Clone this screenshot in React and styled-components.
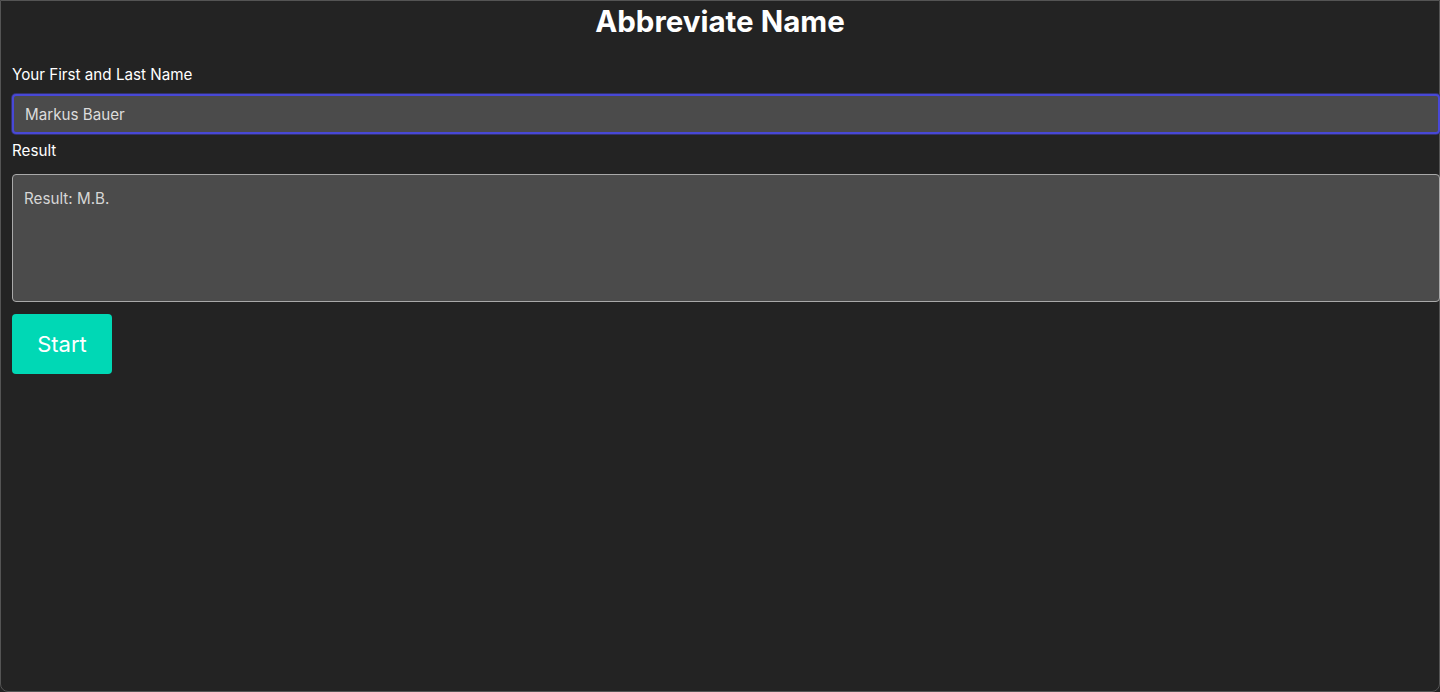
import React from "react";
import styled, { createGlobalStyle } from "styled-components";

const GlobalStyle = createGlobalStyle`
  html, body {
    margin: 0;
    padding: 0;
    background: #232323;
    overflow: hidden;
  }
  body {
    font-family: Inter, "Liberation Sans", sans-serif;
    color: #ffffff;
  }
`;

const Frame = styled.div`
  box-sizing: border-box;
  height: 692px;
  border: 1px solid #545454;
  border-radius: 0 0 8px 8px;
  background: #232323;
`;

const Title = styled.h1`
  margin: 2px 0 0;
  font-size: 29.5px;
  line-height: 36px;
  font-weight: 700;
  text-align: center;
  color: #ffffff;
`;

const Form = styled.div`
  display: flex;
  flex-direction: column;
  align-items: flex-start;
  padding: 26px 0 0 11px;
`;

const Label = styled.label`
  display: block;
  font-size: 15.2px;
  line-height: 20px;
  color: #ffffff;
  margin-bottom: ${(p) => p.$gap}px;
`;

const Field = styled.input`
  box-sizing: border-box;
  width: calc(100% + 1px);
  height: 40px;
  padding: 0 11px;
  margin: 0 0 7px;
  background: #4b4b4b;
  color: #dcdcdc;
  font-family: Inter, "Liberation Sans", sans-serif;
  font-size: 15.2px;
  border: 2px solid #4848d6;
  border-radius: 4px;
  box-shadow: 0 0 0 1px #33336e;
  outline: none;
  caret-color: #ffffff;
`;

const ResultBox = styled.textarea`
  box-sizing: border-box;
  width: calc(100% + 1px);
  height: 128px;
  padding: 14px 11px;
  margin: 0 0 12px;
  background: #4b4b4b;
  color: #d6d6d6;
  font-family: Inter, "Liberation Sans", sans-serif;
  font-size: 15.2px;
  line-height: 20px;
  border: 1px solid #a9a9a9;
  border-radius: 4px;
  resize: none;
  outline: none;
`;

const StartButton = styled.button`
  width: 100px;
  height: 60px;
  background: #00d8b5;
  color: #ffffff;
  font-family: Inter, "Liberation Sans", sans-serif;
  font-size: 22px;
  border: none;
  border-radius: 4px;
  cursor: pointer;
`;

const abbreviate = (name) =>
  name
    .trim()
    .split(/\s+/)
    .map((w) => w[0].toUpperCase())
    .join(".") + ".";

export default function App() {
  const [name, setName] = React.useState("Markus Bauer");
  const [result, setResult] = React.useState("Result: M.B.");

  return (
    <>
      <GlobalStyle />
      <Frame>
        <Title>Abbreviate Name</Title>
        <Form>
          <Label htmlFor="name" $gap={9}>
            Your First and Last Name
          </Label>
          <Field
            id="name"
            autoFocus
            value={name}
            onChange={(e) => setName(e.target.value)}
          />
          <Label htmlFor="result" $gap={13}>
            Result
          </Label>
          <ResultBox id="result" readOnly value={result} />
          <StartButton onClick={() => setResult("Result: " + abbreviate(name))}>
            Start
          </StartButton>
        </Form>
      </Frame>
    </>
  );
}
